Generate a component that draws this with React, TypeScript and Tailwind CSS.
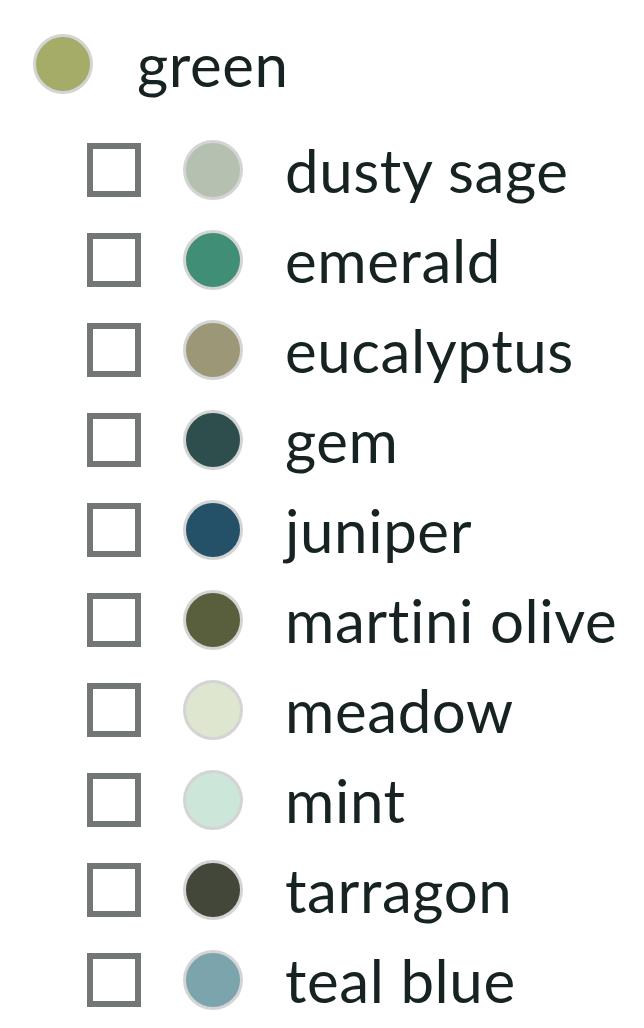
const shades = [
  { name: "dusty sage", color: "bg-[#b5c1b0]" },
  { name: "emerald", color: "bg-[#418e77]" },
  { name: "eucalyptus", color: "bg-[#9b9777]" },
  { name: "gem", color: "bg-[#2e4e4d]" },
  { name: "juniper", color: "bg-[#245167]" },
  { name: "martini olive", color: "bg-[#595f3c]" },
  { name: "meadow", color: "bg-[#dfe6d0]" },
  { name: "mint", color: "bg-[#cce6da]" },
  { name: "tarragon", color: "bg-[#43473a]" },
  { name: "teal blue", color: "bg-[#7ba4ac]" },
];

const Swatch = ({ color }: { color: string }) => (
  <span
    className={`block h-[60px] w-[60px] shrink-0 rounded-full border-[3px] border-[#d4d4d4] ${color}`}
  />
);

export default function App() {
  return (
    <div className="min-h-[1028px] bg-white pt-[19px] font-['Lato',sans-serif] text-[#172322] [font-variant-ligatures:none]">
      <div className="flex h-[90px] items-center pl-[33px]">
        <Swatch color="bg-[#a4ac68]" />
        <span className="ml-[44px] text-[60px] leading-none tracking-[0.6px]">green</span>
      </div>
      <ul className="mt-4 pl-[87px]">
        {shades.map((s) => (
          <li key={s.name} className="flex h-[90px] items-center">
            <span className="block h-[54px] w-[54px] shrink-0 border-[6px] border-[#727776] bg-white" />
            <span className="ml-[42px]">
              <Swatch color={s.color} />
            </span>
            <span className="ml-[42px] whitespace-nowrap text-[60px] leading-none tracking-[0.6px]">
              {s.name}
            </span>
          </li>
        ))}
      </ul>
    </div>
  );
}
